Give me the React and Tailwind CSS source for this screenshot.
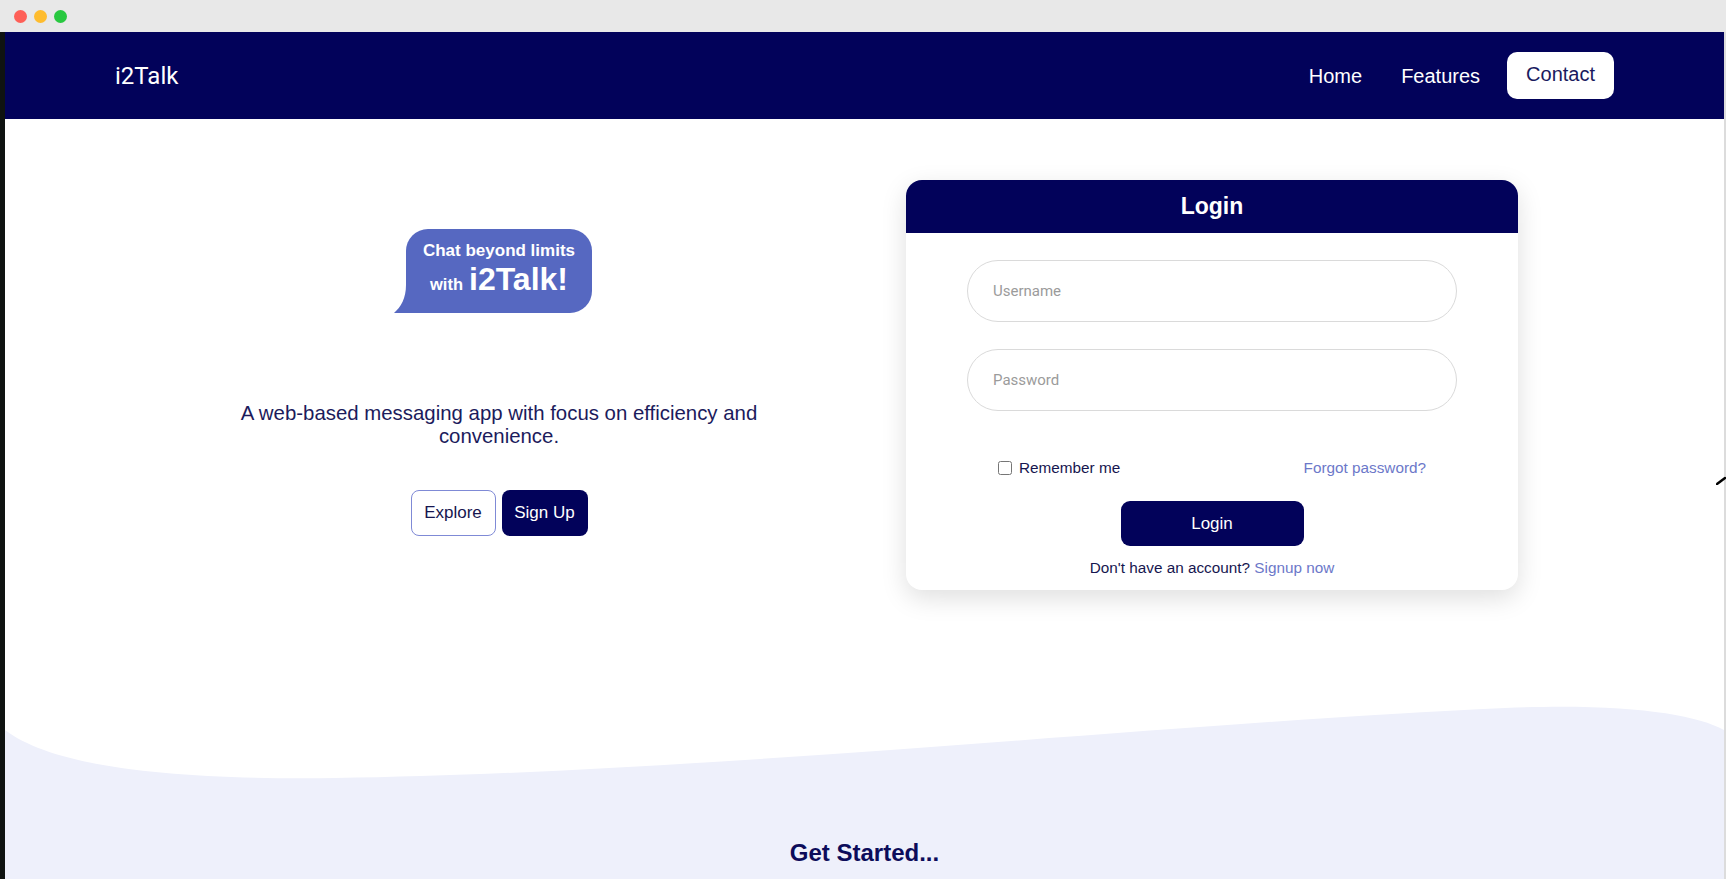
import React from 'react';

function Bubble() {
  return (
    <div className="relative w-[186px] h-[84px] bg-[#5668c1] rounded-[22px] rounded-bl-none flex flex-col items-center pt-[11px] text-white font-bold">
      <svg className="absolute left-[-12px] bottom-0" width="24" height="28" viewBox="0 0 24 28">
        <path d="M12 0 C12 13 7 22 0 28 L24 28 L24 0 Z" fill="#5668c1" />
      </svg>
      <p className="text-[17px] leading-[21px]">Chat beyond limits</p>
      <p className="flex items-baseline gap-[6px] leading-[34px] mt-[1px]">
        <span className="text-[16.5px]">with</span>
        <span className="text-[32px]">i2Talk!</span>
      </p>
    </div>
  );
}

function LoginCard() {
  return (
    <div className="w-[612px] bg-white rounded-[16px] overflow-hidden shadow-[0_8px_26px_rgba(0,0,0,0.13)]">
      <div className="h-[53px] bg-[#02025a] flex items-center justify-center">
        <h2 className="text-white text-[23px] font-bold">Login</h2>
      </div>
      <div className="px-[61px] pt-[27px] pb-[13px] flex flex-col">
        <input
          placeholder="Username"
          className="h-[62px] rounded-full border border-[#dadada] pl-[25px] text-[15px] font-['Roboto',sans-serif] placeholder:text-[#9b9b9b] outline-none"
        />
        <input
          type="password"
          placeholder="Password"
          className="h-[62px] mt-[27px] rounded-full border border-[#dadada] pl-[25px] text-[15px] font-['Roboto',sans-serif] placeholder:text-[#9b9b9b] outline-none"
        />
        <div className="mt-[48px] px-[31px] flex items-center justify-between text-[15.3px] leading-[18px]">
          <label className="flex items-center gap-[7px] text-[#16164f]">
            <input type="checkbox" className="w-[14px] h-[14px] m-0" />
            Remember me
          </label>
          <a className="text-[#6c78c9]">Forgot password?</a>
        </div>
        <button className="self-center mt-[24px] w-[183px] h-[45px] rounded-[9px] bg-[#02025a] text-white text-[17px]">
          Login
        </button>
        <p className="mt-[13px] text-center text-[15.3px] leading-[18px] text-[#16164f]">
          Don't have an account? <a className="text-[#6c78c9]">Signup now</a>
        </p>
      </div>
    </div>
  );
}

export default function App() {
  return (
    <div className="w-[1726px] h-[879px] bg-[#e8e8e8] flex flex-col overflow-hidden relative font-['Liberation_Sans',Arial,sans-serif]">
      {/* window title bar */}
      <div className="h-[32px] flex items-center pl-[14px] gap-[7px] shrink-0">
        <span className="w-[13px] h-[13px] rounded-full bg-[#fe5f57]" />
        <span className="w-[13px] h-[13px] rounded-full bg-[#febc2e]" />
        <span className="w-[13px] h-[13px] rounded-full bg-[#28c840]" />
      </div>

      <div className="flex flex-1 min-h-0">
        <div className="w-[5px] bg-[#0f1311]" />
        <main className="flex-1 bg-white flex flex-col">
          {/* Navbar */}
          <nav className="h-[87px] bg-[#02025a] flex items-center justify-between pl-[110px] pr-[110px] shrink-0">
            <span className="text-white text-[24px] font-['Roboto',sans-serif]">i2Talk</span>
            <div className="flex items-center text-[20px]">
              <a className="text-white mr-[39px]">Home</a>
              <a className="text-white mr-[27px]">Features</a>
              <a className="h-[47px] px-[19px] rounded-[10px] bg-white text-[#1a1a5e] flex items-center pb-[3px]">Contact</a>
            </div>
          </nav>

          {/* Hero */}
          <section className="h-[581px] flex items-start pt-[61px] shrink-0">
            <div className="w-[760px] ml-[114px] flex flex-col items-center pt-[49px]">
              <Bubble />
              <p className="mt-[89px] max-w-[540px] text-center text-[20.4px] leading-[23px] text-[#1c1b5c]">
                A web-based messaging app with focus on efficiency and convenience.
              </p>
              <div className="mt-[42px] flex gap-[6px]">
                <button className="w-[85px] h-[46px] rounded-[8px] border border-[#7f8ad6] text-[#16164f] text-[17px]">
                  Explore
                </button>
                <button className="w-[86px] h-[46px] rounded-[8px] bg-[#02025a] text-white text-[17px]">
                  Sign Up
                </button>
              </div>
            </div>
            <div className="ml-[27px]">
              <LoginCard />
            </div>
          </section>

          {/* Wave + Get Started */}
          <svg className="w-full h-[80px] block shrink-0" viewBox="0 0 1719 80" preserveAspectRatio="none">
            <path
              d="M0 30 C50 68 170 80 330 78 C700 73 1180 22 1500 8 C1620 3 1690 14 1719 30 L1719 80 L0 80 Z"
              fill="#eef0fb"
            />
          </svg>
          <div className="flex-1 bg-[#eef0fb] flex justify-center pt-[59px]">
            <h3 className="text-[24px] leading-[28px] font-bold text-[#0c0c5a]">Get Started...</h3>
          </div>
        </main>
        <div className="w-[2px] bg-[#dcdcdc]" />
      </div>

      {/* cursor artifact at right edge */}
      <svg className="absolute left-[1716px] top-[476px]" width="10" height="9" viewBox="0 0 10 9">
        <path d="M1 8 L9 2" stroke="#000" strokeWidth="2.5" strokeLinecap="round" />
      </svg>
    </div>
  );
}
